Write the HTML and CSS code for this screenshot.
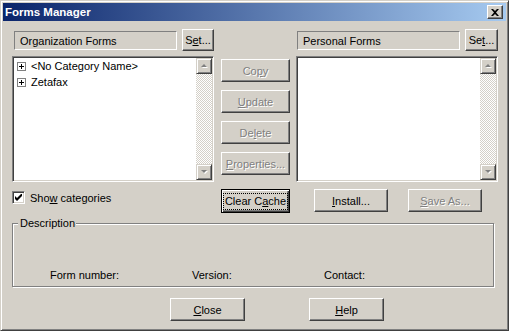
FILE: index.html
```html
<!DOCTYPE html>
<html>
<head>
  <title>Forms Manager</title>
  <link rel="stylesheet" href="styles.css">
</head>
<body>
  <div class="window">
    <div class="titlebar">
      <span class="title">Forms Manager</span>
      <button class="close-x" title="Close">
        <svg width="8" height="7" viewBox="0 0 8 7"><path d="M0 0h2l2 2 2-2h2L5 3.5 8 7H6L4 5 2 7H0l3-3.5z" fill="#000"/></svg>
      </button>
    </div>

    <div class="content">
      <div class="panes">
        <div class="head">
          <div class="static left-static">Organization Forms</div>
          <button class="btn set">S<u>e</u>t...</button>
        </div>
        <div></div>
        <div class="head">
          <div class="static right-static">Personal Forms</div>
          <button class="btn set wide">Se<u>t</u>...</button>
        </div>

        <div class="listbox">
          <ul class="tree">
            <li><span class="expander"></span>&lt;No Category Name&gt;</li>
            <li><span class="expander"></span>Zetafax</li>
          </ul>
          <div class="scrollbar">
            <span class="arrow up"><svg width="7" height="5" viewBox="0 0 7 5"><path d="M4 1l3 3H1z" fill="#fff"/><path d="M3 0l3 3H0z" fill="#808080"/></svg></span>
            <span class="track"></span>
            <span class="arrow down"><svg width="7" height="5" viewBox="0 0 7 5"><path d="M1 1h6L4 4z" fill="#fff"/><path d="M0 0h6L3 3z" fill="#808080"/></svg></span>
          </div>
        </div>

        <div class="actions">
          <button class="btn mid" disabled>Co<u>p</u>y</button>
          <button class="btn mid" disabled><u>U</u>pdate</button>
          <button class="btn mid" disabled>De<u>l</u>ete</button>
          <button class="btn mid" disabled><u>P</u>roperties...</button>
        </div>

        <div class="listbox">
          <ul class="tree"></ul>
          <div class="scrollbar">
            <span class="arrow up"><svg width="7" height="5" viewBox="0 0 7 5"><path d="M4 1l3 3H1z" fill="#fff"/><path d="M3 0l3 3H0z" fill="#808080"/></svg></span>
            <span class="track"></span>
            <span class="arrow down"><svg width="7" height="5" viewBox="0 0 7 5"><path d="M1 1h6L4 4z" fill="#fff"/><path d="M0 0h6L3 3z" fill="#808080"/></svg></span>
          </div>
        </div>

        <label class="check">
          <span class="box"><svg width="7" height="7" viewBox="0 0 7 7"><path d="M0 2v3l2 2 5-5V-1L2 4z" fill="#000"/></svg></span>
          <span>Sho<u>w</u> categories</span>
        </label>
        <div class="mid-col">
          <button class="btn mid default"><span class="focus">Clear C<u>a</u>che</span></button>
        </div>
        <div class="install-row">
          <button class="btn std"><u>I</u>nstall...</button>
          <button class="btn std" disabled><u>S</u>ave As...</button>
        </div>
      </div>

      <fieldset class="group">
        <legend>Description</legend>
        <div class="fields">
          <span class="f-num">Form number:</span>
          <span class="f-ver">Version:</span>
          <span>Contact:</span>
        </div>
      </fieldset>

      <div class="footer">
        <button class="btn std"><u>C</u>lose</button>
        <button class="btn std"><u>H</u>elp</button>
      </div>
    </div>
  </div>
</body>
</html>
```

FILE: styles.css
```css
body {
  margin: 0;
  padding: 0;
  background: #d4d0c8;
  font-family: "Liberation Sans", Arial, sans-serif;
  font-size: 11px;
  color: #000;
}

.window {
  width: 509px;
  height: 331px;
  box-sizing: border-box;
  background: #d4d0c8;
  border: 1px solid;
  border-color: #d4d0c8 #404040 #404040 #d4d0c8;
  box-shadow: inset 1px 1px #fff, inset -1px -1px #808080;
  padding: 2px;
}

.titlebar {
  height: 18px;
  display: flex;
  align-items: center;
  justify-content: space-between;
  padding: 0 3px 0 2px;
  background: linear-gradient(to right, #0a246a, #a6caf0);
}

.title {
  color: white;
  font-weight: bold;
  font-size: 11.5px;
}

.close-x {
  width: 16px;
  height: 14px;
  padding: 0;
  display: flex;
  align-items: center;
  justify-content: center;
  background: #d4d0c8;
  border: 1px solid;
  border-color: #fff #404040 #404040 #fff;
  box-shadow: inset -1px -1px #808080;
}

.content {
  padding: 8px 0 0 9px;
}

.panes {
  display: grid;
  grid-template-columns: 202px 82px 202px;
}

.head {
  display: flex;
  height: 22px;
  margin-bottom: 5px;
}

.static {
  height: 19px;
  width: 163px;
  box-sizing: border-box;
  margin-top: 2px;
  margin-right: 5px;
  padding: 3px 0 0 5px;
  border: 1px solid;
  border-color: #808080 #fff #fff #808080;
}

.left-static { margin-left: 2px; }
.right-static { margin-left: 1px; }

.btn {
  font-family: inherit;
  font-size: 11px;
  color: #000;
  background: #d4d0c8;
  border: 1px solid;
  border-color: #fff #404040 #404040 #fff;
  box-shadow: inset -1px -1px #808080;
  padding: 0;
  height: 23px;
  box-sizing: border-box;
}

.btn:disabled {
  color: #808080;
  text-shadow: 1px 1px 0 #fff;
}

.set { width: 32px; height: 22px; }
.set.wide { width: 33px; }

.listbox {
  height: 126px;
  box-sizing: border-box;
  background: white;
  border: 1px solid;
  border-color: #808080 #fff #fff #808080;
  box-shadow: inset 1px 1px #404040, inset -1px -1px #d4d0c8;
  padding: 1px;
  display: flex;
}

.tree {
  flex: 1;
  list-style: none;
  margin: 0;
  padding: 0;
}

.tree li {
  height: 16px;
  display: flex;
  align-items: center;
  padding-left: 3px;
  white-space: nowrap;
}

.expander {
  width: 9px;
  height: 9px;
  box-sizing: border-box;
  border: 1px solid #808080;
  margin-right: 5px;
  background:
    linear-gradient(#000, #000) center / 5px 1px no-repeat,
    linear-gradient(#000, #000) center / 1px 5px no-repeat,
    white;
}

.scrollbar {
  width: 16px;
  display: flex;
  flex-direction: column;
}

.track {
  flex: 1;
  background: repeating-conic-gradient(#fff 0 25%, #d4d0c8 0 50%) 0 0 / 2px 2px;
}

.arrow {
  width: 16px;
  height: 16px;
  box-sizing: border-box;
  display: flex;
  align-items: center;
  justify-content: center;
  background: #d4d0c8;
  border: 1px solid;
  border-color: #d4d0c8 #404040 #404040 #d4d0c8;
  box-shadow: inset 1px 1px #fff, inset -1px -1px #808080;
}

.actions {
  display: flex;
  flex-direction: column;
  gap: 8px;
  padding: 3px 0 0 7px;
}

.mid { width: 69px; }

.check {
  display: flex;
  align-items: center;
  gap: 5px;
  margin-top: 9px;
  align-self: start;
  height: 13px;
}

.box {
  width: 13px;
  height: 13px;
  box-sizing: border-box;
  background: white;
  border: 1px solid;
  border-color: #808080 #fff #fff #808080;
  box-shadow: inset 1px 1px #404040, inset -1px -1px #d4d0c8;
  display: flex;
  align-items: center;
  justify-content: center;
}

.mid-col {
  padding: 7px 0 0 7px;
}

.default {
  height: 24px;
  border-color: #000;
  box-shadow: inset 1px 1px #fff, inset -1px -1px #404040, inset -2px -2px #808080;
}

.focus {
  display: inline-block;
  outline: 1px dotted #000;
  outline-offset: 0;
  padding: 1px 1px 2px 1px;
}

.install-row {
  display: flex;
  gap: 20px;
  padding: 7px 0 0 18px;
}

.std { width: 75px; }
.install-row .std { width: 74px; }

.group {
  width: 482px;
  height: 70px;
  box-sizing: border-box;
  margin: 4px 0 0 0;
  padding: 0;
  border: 1px solid #808080;
  box-shadow: inset 1px 1px #fff, 1px 1px #fff;
}

.group legend {
  margin-left: 5px;
  padding: 0 1px 0 2px;
  background: #d4d0c8;
}

.fields {
  display: flex;
  padding: 40px 0 0 37px;
}

.f-num { width: 142px; }
.f-ver { width: 132px; }

.footer {
  display: flex;
  gap: 64px;
  padding: 11px 0 0 158px;
}
```
